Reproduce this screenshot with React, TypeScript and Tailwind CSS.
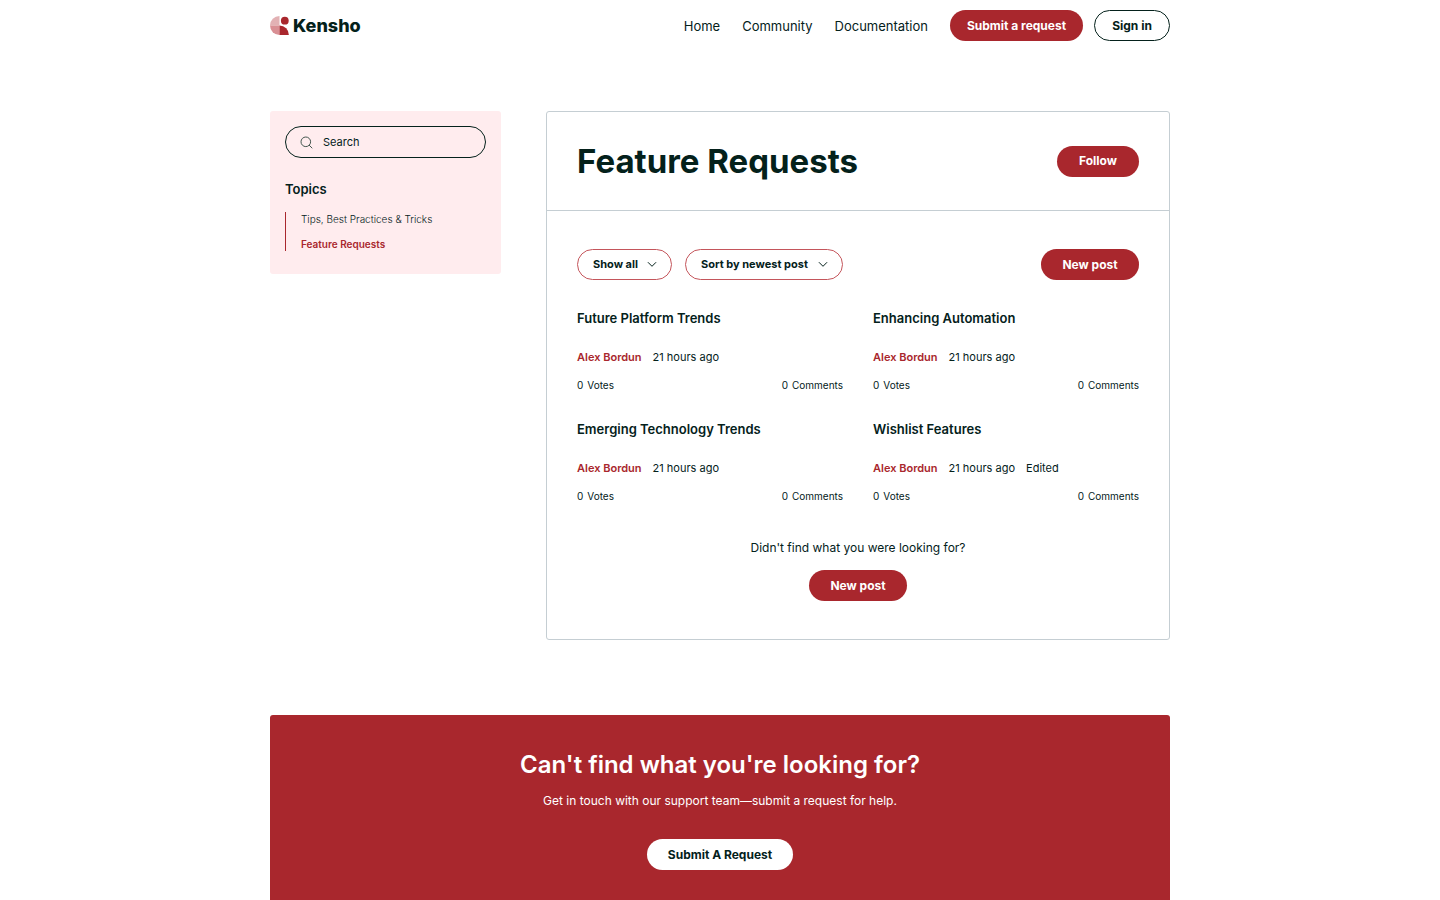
import type { ReactNode } from 'react';

interface Post {
  title: string;
  author: string;
  time: string;
  edited?: boolean;
  votes: number;
  comments: number;
}

const navLinks = ['Home', 'Community', 'Documentation'];

const topics = [
  { name: 'Tips, Best Practices & Tricks', active: false },
  { name: 'Feature Requests', active: true },
];

const posts: Post[] = [
  { title: 'Future Platform Trends', author: 'Alex Bordun', time: '21 hours ago', votes: 0, comments: 0 },
  { title: 'Enhancing Automation', author: 'Alex Bordun', time: '21 hours ago', votes: 0, comments: 0 },
  { title: 'Emerging Technology Trends', author: 'Alex Bordun', time: '21 hours ago', votes: 0, comments: 0 },
  { title: 'Wishlist Features', author: 'Alex Bordun', time: '21 hours ago', edited: true, votes: 0, comments: 0 },
];

function Logo() {
  return (
    <a href="#home" className="flex items-center gap-1">
      <svg className="h-[19px] w-[19px]" viewBox="0 0 19 19" aria-hidden="true">
        <path d="M9.5 0v9.5H0A9.5 9.5 0 0 1 9.5 0Z" fill="#e2b1b4" />
        <path d="M0 9.5h9.5V19A9.5 9.5 0 0 1 0 9.5Z" fill="#d98f94" />
        <path d="M9.5 9.5A9.3 9.3 0 0 1 18.8 19H9.5Z" fill="#a9272d" />
        <circle cx="14.8" cy="4.7" r="3.9" fill="#a9272d" />
      </svg>
      <span className="text-[18px] leading-6 font-extrabold">Kensho</span>
    </a>
  );
}

function Chevron() {
  return (
    <svg
      className="pointer-events-none h-[10px] w-[10px]"
      viewBox="0 0 10 10"
      fill="none"
      stroke="currentColor"
      aria-hidden="true"
    >
      <path d="M1.2 2.5 5 6.3 8.8 2.5" strokeLinecap="round" strokeLinejoin="round" />
    </svg>
  );
}

function Filter({ label, width, options }: { label: string; width: string; options: string[] }) {
  return (
    <div className={`relative ${width}`}>
      <select
        aria-label={label}
        className="h-[31px] w-full appearance-none rounded-full border border-[#c4555b] bg-white pr-6 pb-px pl-[15px] text-[11px] font-bold"
      >
        {options.map((option) => (
          <option key={option}>{option}</option>
        ))}
      </select>
      <span className="pointer-events-none absolute inset-y-0 right-[15px] flex items-center">
        <Chevron />
      </span>
    </div>
  );
}

function PillButton({ children, className }: { children: ReactNode; className: string }) {
  return (
    <button type="button" className={`h-[31px] rounded-full text-xs font-bold whitespace-nowrap ${className}`}>
      {children}
    </button>
  );
}

function PostCard({ post }: { post: Post }) {
  return (
    <article>
      <h2 className="text-[13px] leading-5 font-semibold">
        <a href="#post">{post.title}</a>
      </h2>
      <div className="mt-[19px] flex gap-[11px] text-[11px] leading-5">
        <a href="#author" className="font-semibold text-[#a9272d]">
          {post.author}
        </a>
        <span>{post.time}</span>
        {post.edited && <span>Edited</span>}
      </div>
      <div className="mt-[10px] flex justify-between text-[10px] leading-4">
        <span className="flex gap-1">
          <span>{post.votes}</span>
          <span>Votes</span>
        </span>
        <span className="flex gap-1">
          <span>{post.comments}</span>
          <span>Comments</span>
        </span>
      </div>
    </article>
  );
}

export default function App() {
  return (
    <div className="bg-white font-['Inter',sans-serif] text-[#04211b]">
      <div className="mx-auto max-w-[900px]">
        <header className="flex h-[51px] items-center justify-between">
          <Logo />
          <div className="flex items-center">
            <nav className="flex gap-[22px] text-[13px] leading-5">
              {navLinks.map((link) => (
                <a key={link} href="#nav">
                  {link}
                </a>
              ))}
            </nav>
            <PillButton className="ml-[22px] w-[133px] bg-[#a9272d] text-white">Submit a request</PillButton>
            <PillButton className="ml-[11px] w-[76px] border border-[#04211b]">Sign in</PillButton>
          </div>
        </header>

        <main className="mt-[60px] flex items-start gap-[45px]">
          <aside className="w-[231px] shrink-0 rounded-[3px] bg-[#ffecee] p-[15px] pb-[23px]">
            <label className="flex h-8 items-center gap-[10px] rounded-full border border-[#04211b] px-[14px]">
              <svg
                className="h-[13px] w-[13px] shrink-0"
                viewBox="0 0 13 13"
                fill="none"
                stroke="#44564f"
                aria-hidden="true"
              >
                <circle cx="5.8" cy="5.8" r="4.8" />
                <path d="m9.3 9.3 2.7 2.7" strokeLinecap="round" />
              </svg>
              <input
                type="search"
                aria-label="Search"
                placeholder="Search"
                className="w-full min-w-0 bg-transparent text-[11px] outline-none placeholder:text-[#04211b]"
              />
            </label>
            <h2 className="mt-[21px] text-[13px] leading-5 font-semibold">Topics</h2>
            <ul className="mt-[13px] flex flex-col gap-[11px] border-l border-[#a9272d] pl-[15px] text-[10px] leading-[14px]">
              {topics.map((topic) => (
                <li key={topic.name}>
                  <a href="#topic" className={topic.active ? 'font-semibold text-[#a9272d]' : 'font-light'}>
                    {topic.name}
                  </a>
                </li>
              ))}
            </ul>
          </aside>

          <section className="min-w-0 flex-1 rounded-[3px] border border-[#c5ced3]">
            <div className="flex h-[99px] items-center justify-between border-b border-[#c5ced3] px-[30px]">
              <h1 className="text-[33px] leading-10 font-bold">Feature Requests</h1>
              <PillButton className="w-[82px] bg-[#a9272d] text-white">Follow</PillButton>
            </div>

            <div className="px-[30px] py-[38px]">
              <div className="flex gap-[13px]">
                <Filter
                  label="Show"
                  width="w-[95px]"
                  options={['Show all', 'Planned', 'Not planned', 'Completed', 'Answered']}
                />
                <Filter
                  label="Sort by"
                  width="w-[158px]"
                  options={['Sort by newest post', 'Sort by recent activity', 'Sort by votes', 'Sort by comments']}
                />
                <PillButton className="ml-auto w-[98px] bg-[#a9272d] text-white">New post</PillButton>
              </div>

              <div className="mt-7 grid grid-cols-2 gap-x-[30px] gap-y-[26px]">
                {posts.map((post) => (
                  <PostCard key={post.title} post={post} />
                ))}
              </div>

              <div className="mt-[34px] text-center">
                <p className="text-xs leading-5">Didn't find what you were looking for?</p>
                <PillButton className="mt-3 w-[98px] bg-[#a9272d] text-white">New post</PillButton>
              </div>
            </div>
          </section>
        </main>

        <section className="mt-[75px] rounded-[3px] bg-[#a9272d] pt-[34px] pb-[45px] text-center text-white">
          <h2 className="text-2xl font-semibold">Can't find what you're looking for?</h2>
          <p className="mt-[10px] text-xs leading-5">Get in touch with our support team—submit a request for help.</p>
          <PillButton className="mt-7 w-[146px] bg-white text-[#04211b]">Submit A Request</PillButton>
        </section>
      </div>
    </div>
  );
}
